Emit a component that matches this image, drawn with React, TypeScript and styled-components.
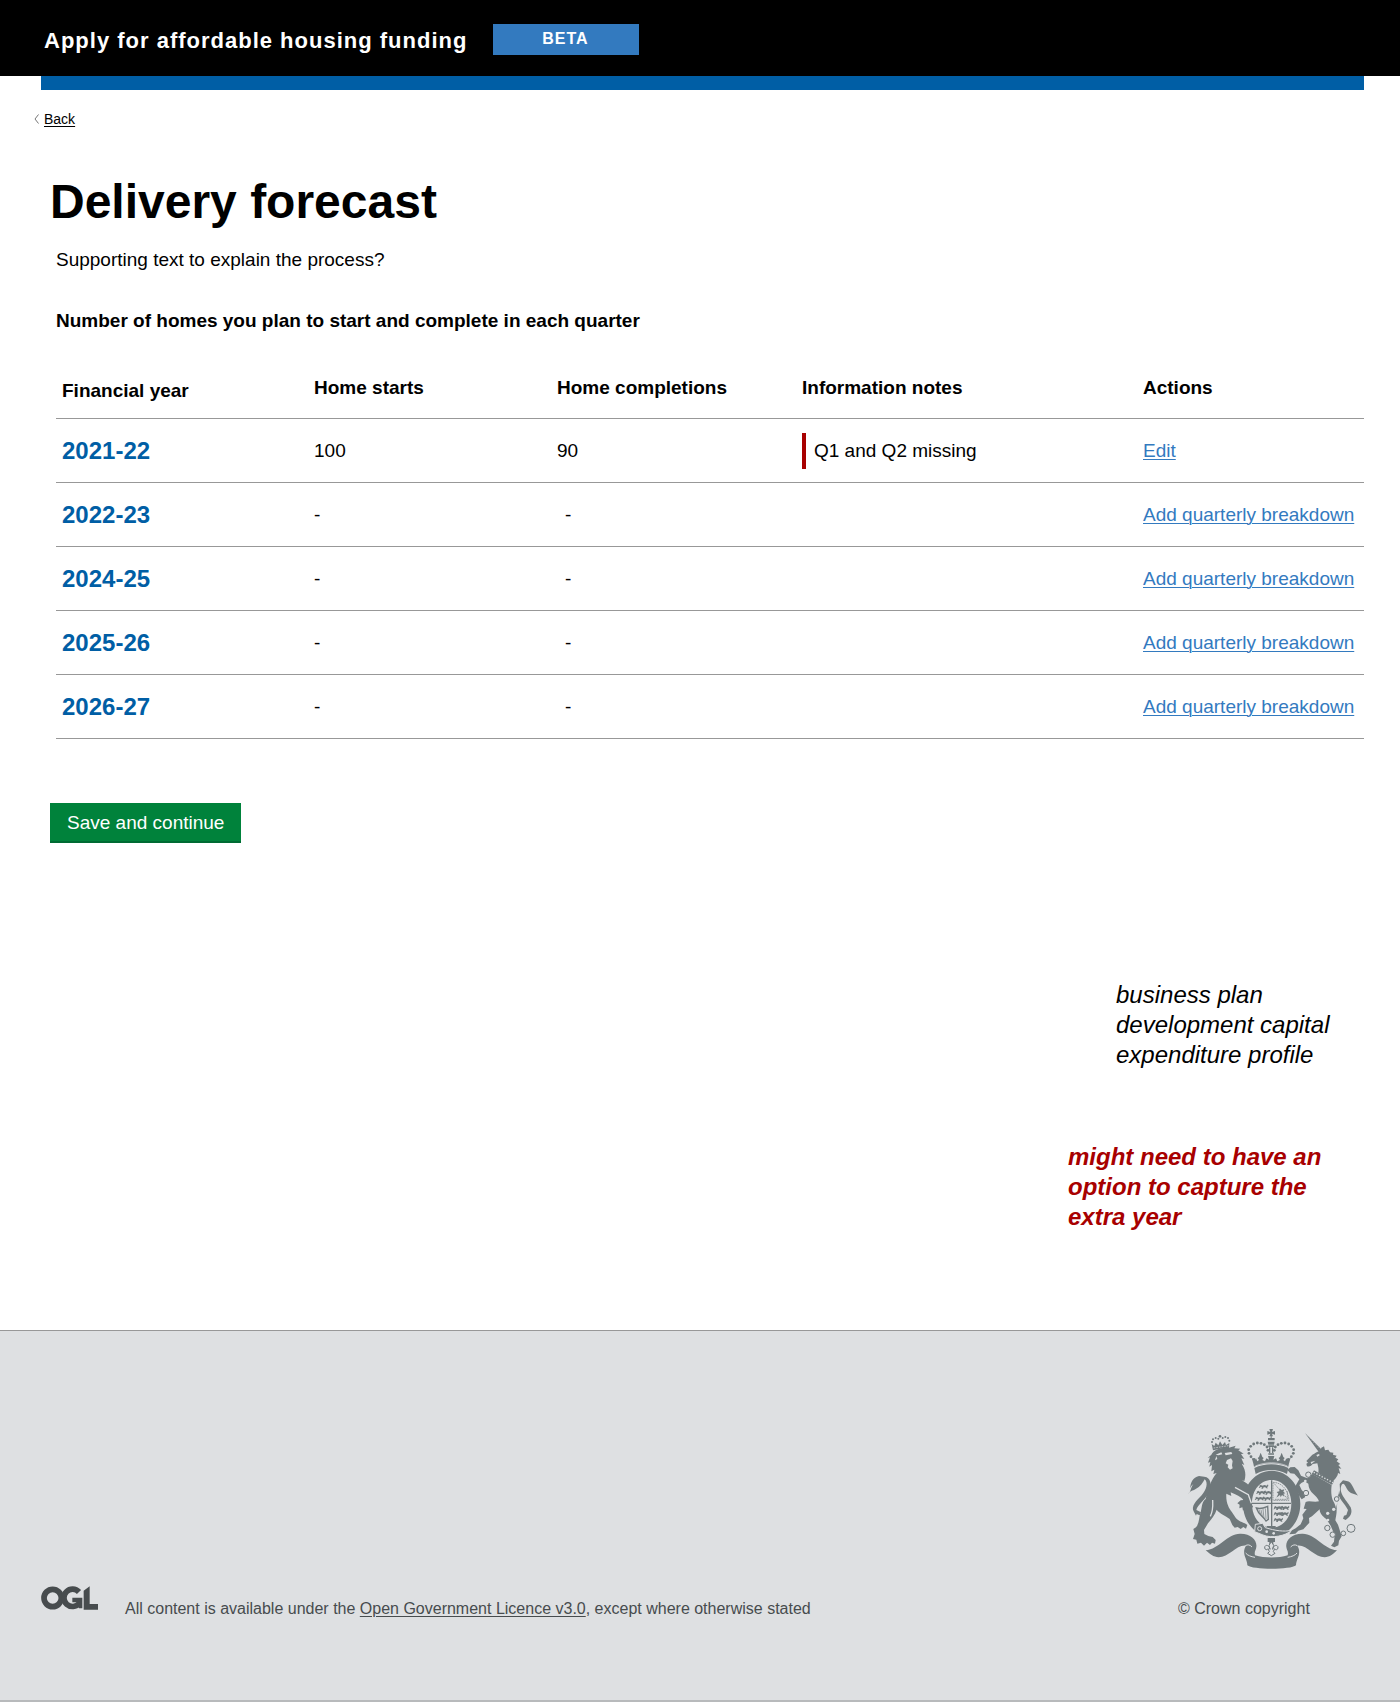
import React from "react";
import styled, { createGlobalStyle, css } from "styled-components";

const colours = {
  text: "#000000",
  brand: "#005ea5",
  link: "#337abf",
  rule: "#989898",
  alert: "#a80000",
  button: "#00823b",
  buttonEdge: "#006b33",
  footer: "#dee0e2",
  footerText: "#474c4e",
  crest: "#6f787b",
};

const GlobalStyle = createGlobalStyle`
  *, *::before, *::after { box-sizing: border-box; }
  body {
    margin: 0;
    background: #ffffff;
    color: ${colours.text};
    font-family: "Liberation Sans", Arial, Helvetica, sans-serif;
    font-size: 19px;
    line-height: 24px;
  }
`;

const Header = styled.header`
  display: flex;
  align-items: center;
  gap: 26px;
  padding: 24px 44px 21px;
  background: #000000;
  color: #ffffff;
`;

const ServiceName = styled.span`
  padding-top: 2px;
  font-size: 22px;
  font-weight: 700;
  letter-spacing: 1px;
  line-height: 24px;
`;

const PhaseTag = styled.strong`
  width: 146px;
  padding: 0 2px 1px 0;
  background: ${colours.link};
  font-size: 16px;
  letter-spacing: 1px;
  line-height: 30px;
  text-align: center;
`;

const BrandBar = styled.div`
  height: 14px;
  margin: 0 36px 0 41px;
  background: ${colours.brand};
`;

const BackLink = styled.a`
  display: inline-flex;
  align-items: center;
  gap: 5px;
  margin: 19px 0 0 34px;
  color: ${colours.text};
  font-size: 14px;
  line-height: 20px;
  text-decoration: none;

  span {
    text-decoration: underline;
    text-underline-offset: 2px;
  }
`;

const Main = styled.main`
  display: flex;
  flex-direction: column;
  align-items: flex-start;
  padding: 44px 36px 98px 50px;
`;

const Title = styled.h1`
  margin: 0;
  font-size: 48px;
  line-height: 56px;
`;

const Section = styled.section`
  align-self: stretch;
  padding: 18px 0 0 6px;
`;

const Lead = styled.p`
  margin: 0 0 37px;
`;

const SectionTitle = styled.h2`
  margin: 0 0 43px;
  font-size: 19px;
  line-height: 24px;
`;

const Table = styled.table`
  width: 100%;
  border-collapse: collapse;
  table-layout: fixed;
`;

const Row = styled.tr`
  height: 64px;
  border-bottom: 1px solid ${colours.rule};
`;

const HeadRow = styled(Row)`
  height: 42px;
`;

const Col = styled.col<{ $width?: number }>`
  ${({ $width }) => $width && css`width: ${$width}px;`}
`;

const HeadCell = styled.th<{ $lead?: boolean }>`
  padding: 0 0 0 ${({ $lead }) => ($lead ? 6 : 0)}px;
  line-height: ${({ $lead }) => ($lead ? 30 : 24)}px;
  text-align: left;
  vertical-align: top;
`;

const YearCell = styled.th`
  padding: 2px 0 0 6px;
  color: ${colours.brand};
  font-size: 24px;
  line-height: 30px;
  text-align: left;
`;

const Cell = styled.td<{ $inset?: boolean }>`
  padding: 2px 0 0 ${({ $inset }) => ($inset ? 8 : 0)}px;
`;

const Warning = styled.div`
  padding: 6px 8px;
  border-left: 4px solid ${colours.alert};
`;

const ActionLink = styled.a`
  color: ${colours.link};
  text-underline-offset: 2px;
  text-decoration-thickness: 1px;
`;

const SaveButton = styled.button`
  margin: 64px 0 0;
  padding: 8px 17px 6px;
  border: 0;
  border-bottom: 2px solid ${colours.buttonEdge};
  background: ${colours.button};
  color: #ffffff;
  font: inherit;
  cursor: pointer;
`;

const Notes = styled.aside`
  display: flex;
  flex-direction: column;
  align-items: flex-end;
  align-self: flex-end;
  gap: 72px;
  margin-top: 137px;
  font-size: 24px;
  font-style: italic;
  line-height: 30px;
`;

const Note = styled.p`
  width: 248px;
  margin: 0;
  padding-right: 16px;
`;

const UrgentNote = styled(Note)`
  width: 296px;
  color: ${colours.alert};
  font-weight: 700;
`;

const Footer = styled.footer`
  display: flex;
  align-items: flex-end;
  justify-content: space-between;
  padding: 97px 36px 79px 41px;
  border-top: 1px solid ${colours.rule};
  border-bottom: 2px solid #b8babc;
  background: ${colours.footer};
  color: ${colours.footerText};
  font-size: 16px;
`;

const Licence = styled.div`
  display: flex;
  align-items: flex-end;
  gap: 27px;

  svg { margin-bottom: 11px; }
  p { margin: 0; }
  a { color: inherit; text-underline-offset: 2px; }
`;

const Copyright = styled.div`
  display: flex;
  flex-direction: column;
  gap: 27px;
  width: 186px;

  svg { margin-left: 10px; }
`;

const Chevron = () => (
  <svg width="5" height="10" viewBox="0 0 5 10" fill="none" stroke="#777" aria-hidden="true">
    <path d="M4.500 .5 1 5l3.500 4.500" />
  </svg>
);

const OglLogo = () => (
  <svg width="57" height="24" viewBox="122 76 171 72" fill={colours.footerText} role="img" aria-label="OGL">
    <circle cx="157" cy="112" r="26" fill="none" stroke={colours.footerText} strokeWidth="17" />
    <path
      d="M236 94 A26 26 0 1 0 237 128"
      fill="none"
      stroke={colours.footerText}
      strokeWidth="17"
    />
    <path d="M216 111H246V143H236L230 125H216Z" />
    <path d="M250 90 268 77V130H293V147H250Z" />
  </svg>
);

const crownDots = [
  [222, 118], [213, 110], [207, 100], [206, 89], [212, 79], [221, 72],
  [232, 69], [243, 70], [253, 74], [261, 81], [264, 91],
];

const Charge = ({ x, y }: { x: number; y: number }) => (
  <path
    d={`M${x} ${y}l5-3 3 3 8-2 6 2 4-4 1 5-4 4 3 3h-5l-3-3h-5l-2 4h-5l2-4-4-1-3 3h-3l3-4z`}
  />
);

const Crest = () => (
  <svg
    width="170"
    height="142"
    viewBox="24 24 510 426"
    fill={colours.crest}
    role="img"
    aria-label="Royal coat of arms"
  >
    {/* central crown */}
    <path d="M268 27h11l-3 9 9-3v11l-9-3 3 8h-4v5h9v7h-20v-7h8v-5h-4l3-8-9 3v-11l9 3z" />
    {crownDots.map(([x, y]) => (
      <g key={`${x}-${y}`}>
        <circle cx={x} cy={y} r="4.200" />
        <circle cx={547 - x} cy={y} r="4.200" />
      </g>
    ))}
    <path d="M263 65h21l-2 9h-17zM265 76h17v5h-17zM267 82h4v17h-4zM276 82h4v17h-4zM265 100h17v4h-17z" />
    <path d="M222 140C220 128 217 120 215 113l10 7 3-5 4 9 5-4-4-6 4-3 5-13 5 13 4 3-4 6 8 4 4-9 8 4-3-11h19l-3 11 8-4 4 9 8-4-4-6 4-3 5-13 5 13 4 3-4 6 5 4 4-9 3 5 10-7c-2 7-5 15-7 27-31-14-71-14-103 0z" />
    <path d="M223 144c31-15 71-15 102 0l-4 18c-28-16-66-16-94 0z" />
    <path d="M226 138c30-13 67-13 96 0" fill="none" stroke={colours.footer} strokeWidth="2" />

    {/* garter and shield */}
    <path
      fillRule="evenodd"
      d="M275 152c48 0 86 43 86 99s-38 98-86 98-86-42-86-98 38-99 86-99zm0 28c-34 0-59 30-59 71s25 72 59 72 59-31 59-72-25-71-59-71z"
    />
    <path d="M273 181h4v137h-4zM216 248h117v4H216z" />
    <path
      d="M279 187c27 1 45 22 48 54h-48zM283 191l39 45M322 214v24h-39"
      fill="none"
      stroke={colours.crest}
      strokeWidth="2"
      strokeDasharray="5 2"
    />
    <path d="M289 233l6-12-5-5 8-2 1-9 6 5 8-2-3 7 6 5-6 1 3 9-7-5-4 7-2-7z" />
    <Charge x={238} y={197} />
    <Charge x={230} y={215} />
    <Charge x={226} y={233} />
    <Charge x={250} y={215} />
    <Charge x={247} y={233} />
    <Charge x={282} y={261} />
    <Charge x={282} y={279} />
    <Charge x={282} y={297} />
    <Charge x={301} y={261} />
    <Charge x={299} y={279} />
    <path d="M229 264c12 4 23 0 34-5l2 39-7 5c-8-14-22-17-29-39z" fill="none" stroke={colours.crest} strokeWidth="4" />
    <path d="M237 269l5 14M243 269l4 20M249 267l3 28M256 265l2 32" fill="none" stroke={colours.crest} strokeWidth="2" />
    <path d="M260 318h27v7h-27z" />
    <path
      d="M226 313l22-3 8 13c30 9 55 13 79 8-19 17-59 25-86 14l-25-10z"
      stroke={colours.footer}
      strokeWidth="3"
    />
    <circle cx="239" cy="326" r="6" fill="none" stroke={colours.footer} strokeWidth="3" />
    <g fill={colours.footer}>
      <circle cx="260" cy="335" r="4" />
      <circle cx="281" cy="340" r="4" />
    </g>

    {/* lion */}
    <g>
      <path d="M99 91l-4-19 8 6 4-10 8 8 5-12 7 11 8-9 3 9 10-6-1 19c-15-3-32-2-48 3z" />
      <path d="M101 84l45-7" stroke={colours.footer} strokeWidth="2" strokeDasharray="5 3" />
      <g>
        <circle cx="96" cy="66" r="3" />
        <circle cx="99" cy="58" r="3" />
        <circle cx="107" cy="54" r="3" />
        <circle cx="115" cy="56" r="3" />
        <circle cx="120" cy="49" r="4" />
        <circle cx="128" cy="54" r="3" />
        <circle cx="136" cy="51" r="3" />
        <circle cx="144" cy="54" r="3" />
        <circle cx="148" cy="62" r="3" />
      </g>
      <path d="M94 104c6-14 27-22 53-21l20-6-4 8 18 1-6 5 16 10-8 1 10 15-9-2 9 20-8-4c13 20 13 35 8 52l-9-3c8 5 20 9 25 22 7 18 2 34 3 49l7 8-5 10-6-4-4 10-6-10-9 7-2-10-9 3 1-11-7-4 10-9 9-1c-8-10-23-15-39-23l2 11-15-7c-2 26 8 44 16 54l13 20c11 12 24 12 34 20l-4 11-8-5-8 6-9-6-9 2-7-8-8-18c-15-12-30-16-39-28-5 16-16 29-26 41l-12 20 1 12 12 6 13 3 9 9-2 11-9-3-6 7-9-7-9 9-9-9-11 3-3-12-10-2 5-15-4-15 8-5c11-14 8-28 14-45 5-19 2-29 15-40 7-32 17-58 33-78l-10 3 3-13-9 5 2-19-8 5 3-14-7 2 6-16-7 2z" />
      <path d="M91 289c10-20 7-42 7-49M165 202l40 22 9 26" fill="none" stroke={colours.footer} strokeWidth="4" />
      <path
        d="M107 104l17-7 3 6-12 3zM134 99l20-3 3 6-20 4zM141 120l12-5 5 8-2 13 2 9-8 4-7-7 2-8-8-4zM109 108l3 9-7 4z"
        fill={colours.footer}
      />
      <path d="M24 222c10-7 7-18 16-29-5 3-8 7-10 13 2-18 8-34 27-38l16 2c20 2 23 26 15 45-10 23-36 39-39 55l14 7-4 9-9-4-2 5-6-11c-11-17 8-34 23-50 15-17 20-39 9-48-5 10-13 22-27 29-10 6-16 5-23 15z" />
    </g>

    {/* unicorn */}
    <g>
      <path d="M375 39l55 55-10 7z" />
      <path d="M383 47l36 41" stroke={colours.footer} strokeWidth="2" strokeDasharray="2 7" />
      <path d="M397 104c8-3 14-10 24-11l3-10 8-4 3 12 10-2 5 8 10 1-1 6 11 3-4 6 9 5-5 6 11 8-6 3 9 11-8-1 5 17-7-3c-1 12-10 18-17 28l-42-29c2-10-1-19-3-28l-14 2c-4 5-8 9-17 7l-2-8 5-3-5-5z" />
      <path d="M409 105l8-3 2 4-7 4zM392 126l14-4-12 10z" fill={colours.footer} />
      <path d="M402 151l60 34-6 9-61-32z" />
      <path d="M401 157l60 32" stroke={colours.footer} strokeWidth="4" strokeDasharray="4 5" />
      <path d="M397 162l58 33c-2 15-2 30 3 45 14 22 12 42 8 61l8 13 11 35-8 13-2 14-12 6-10-5 9-12 2-20-12-28-13-20c-12-8-20-17-20-29l-23 21-9 5 1 14-18 20-15 4-9 9-18 2 8-12 11-6 15-12 8-18-3-11 13-17-9-1 6-20c11-5 25 2 40-2-5-20-31-23-32-53l-11-7-10 5-6 6 7 15 11 12-1 10-10 6-7-10-5-13-8-15 13-22-15-17-12-1-9-10 9-8 13-1 11 10 8 16 19 8z" />
      <path d="M468 290c-3-12 0-26 3-38l9-42-1-18 10-11 11 2c17 3 17 20 34 44-9-6-24-4-33-20-7-12-8-19-15-14-14 24 14 48 26 69 7 18-2 29-15 38l-8-4 3-9 7-2 5-15c-9-19-32-36-29-57z" />
      <g fill={colours.footer} stroke={colours.crest} strokeWidth="3">
        <circle cx="385" cy="164" r="8" />
        <circle cx="378" cy="219" r="8" />
        <circle cx="470" cy="237" r="7" />
        <circle cx="442" cy="324" r="8" />
        <circle cx="458" cy="344" r="8" />
        <circle cx="490" cy="340" r="7" />
        <circle cx="513" cy="325" r="12" />
      </g>
      <g fill={colours.footer}>
        <circle cx="376" cy="183" r="4" />
        <circle cx="461" cy="268" r="5" />
        <circle cx="443" cy="280" r="5" />
        <circle cx="444" cy="300" r="4" />
      </g>
    </g>

    {/* motto ribbon and fleur-de-lis */}
    <path d="M77 391c40-4 64-49 103-50 33-1 52 20 49 40-1 10-7 12-4 25 29 9 70 9 98 0 3-13-3-15-4-25-3-20 16-41 49-40 39 1 63 46 103 50-10 10-22 21-37 21-31 0-54-39-82-35 6 10 7 17 4 30-5 14-8 20-8 29-15 14-131 14-146 0 0-9-3-15-8-29-3-13-2-20 4-30-28-4-51 35-82 35-15 0-27-11-39-21z" />
    <path d="M196 377c7-4 14-3 20 4M352 377c-7-4-14-3-20 4M197 399c5 7 16 11 28 13M351 399c-5 7-16 11-28 13" fill="none" stroke={colours.footer} strokeWidth="3" />
    <path d="M263 354h22v12h-5v10h-12v-10h-5z" />
    <path
      d="M274 365l7 11-3 12c2-15 17-15 16-4-1 6-8 7-10 2l-4 9 5 5-11 7-11-7 5-5-4-9c-2 5-9 4-10-2-1-11 14-11 16 4l-3-12z"
      fill={colours.footer}
      stroke={colours.crest}
      strokeWidth="3"
    />
  </svg>
);

interface YearForecast {
  year: string;
  starts?: number;
  completions?: number;
  note?: string;
}

const forecasts: YearForecast[] = [
  { year: "2021-22", starts: 100, completions: 90, note: "Q1 and Q2 missing" },
  { year: "2022-23" },
  { year: "2024-25" },
  { year: "2025-26" },
  { year: "2026-27" },
];

const ForecastRow = ({ year, starts, completions, note }: YearForecast) => (
  <Row>
    <YearCell scope="row">{year}</YearCell>
    <Cell>{starts ?? "-"}</Cell>
    <Cell $inset={completions === undefined}>{completions ?? "-"}</Cell>
    <Cell>{note && <Warning>{note}</Warning>}</Cell>
    <Cell>
      <ActionLink href="#">{starts === undefined ? "Add quarterly breakdown" : "Edit"}</ActionLink>
    </Cell>
  </Row>
);

export default function App() {
  return (
    <>
      <GlobalStyle />
      <Header>
        <ServiceName>Apply for affordable housing funding</ServiceName>
        <PhaseTag>BETA</PhaseTag>
      </Header>
      <BrandBar />
      <BackLink href="#">
        <Chevron />
        <span>Back</span>
      </BackLink>
      <Main>
        <Title>Delivery forecast</Title>
        <Section>
          <Lead>Supporting text to explain the process?</Lead>
          <SectionTitle id="homes-heading">
            Number of homes you plan to start and complete in each quarter
          </SectionTitle>
          <Table aria-labelledby="homes-heading">
            <colgroup>
              <Col $width={258} />
              <Col $width={243} />
              <Col $width={245} />
              <Col />
              <Col $width={221} />
            </colgroup>
            <thead>
              <HeadRow>
                <HeadCell scope="col" $lead>Financial year</HeadCell>
                <HeadCell scope="col">Home starts</HeadCell>
                <HeadCell scope="col">Home completions</HeadCell>
                <HeadCell scope="col">Information notes</HeadCell>
                <HeadCell scope="col">Actions</HeadCell>
              </HeadRow>
            </thead>
            <tbody>
              {forecasts.map((forecast) => (
                <ForecastRow key={forecast.year} {...forecast} />
              ))}
            </tbody>
          </Table>
        </Section>
        <SaveButton type="button">Save and continue</SaveButton>
        <Notes>
          <Note>business plan development capital expenditure profile</Note>
          <UrgentNote>might need to have an option to capture the extra year</UrgentNote>
        </Notes>
      </Main>
      <Footer>
        <Licence>
          <OglLogo />
          <p>
            All content is available under the <a href="#">Open Government Licence v3.0</a>, except
            where otherwise stated
          </p>
        </Licence>
        <Copyright>
          <Crest />
          <span>© Crown copyright</span>
        </Copyright>
      </Footer>
    </>
  );
}
